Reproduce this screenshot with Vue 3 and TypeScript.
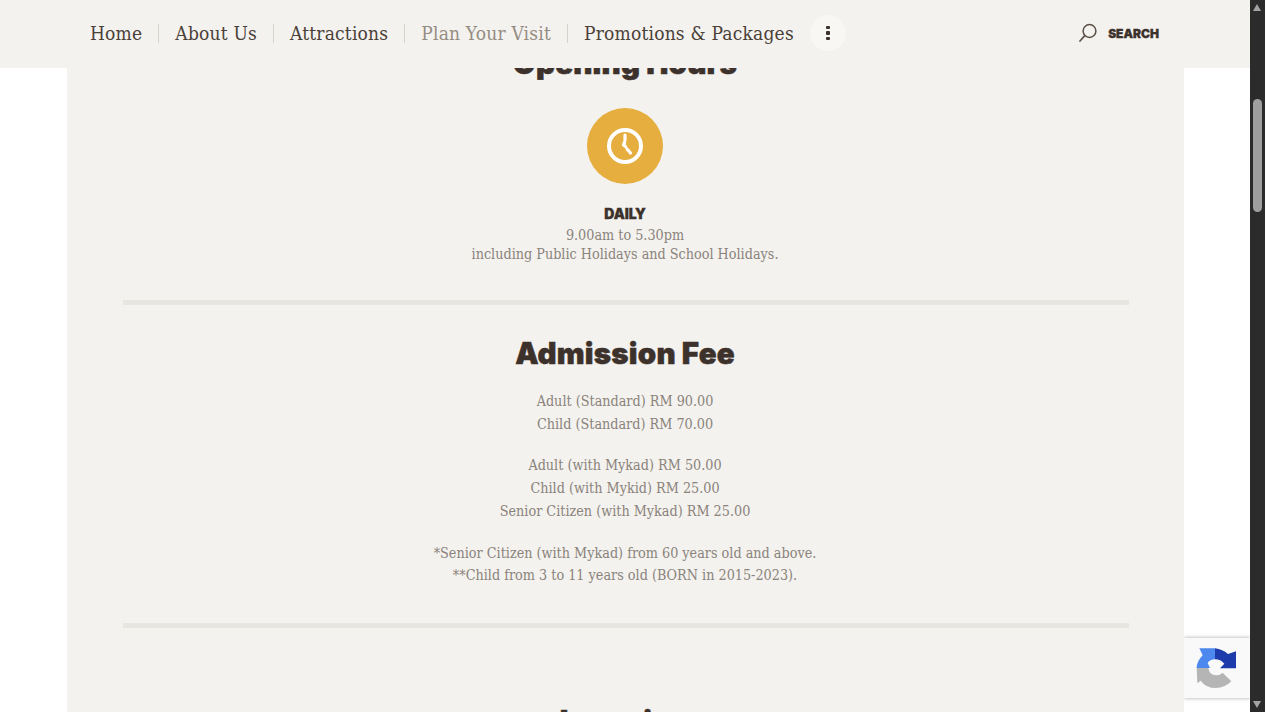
<script setup lang="ts">
const navItems = [
  { label: 'Home', active: false },
  { label: 'About Us', active: false },
  { label: 'Attractions', active: false },
  { label: 'Plan Your Visit', active: true },
  { label: 'Promotions & Packages', active: false },
]

const feeGroups = [
  ['Adult (Standard) RM 90.00', 'Child (Standard) RM 70.00'],
  ['Adult (with Mykad) RM 50.00', 'Child (with Mykid) RM 25.00', 'Senior Citizen (with Mykad) RM 25.00'],
  ['*Senior Citizen (with Mykad) from 60 years old and above.', '**Child from 3 to 11 years old (BORN in 2015-2023).'],
]
</script>

<template>
  <div class="window">
    <div class="viewport">
      <header class="topbar">
        <nav class="nav">
          <a v-for="item in navItems" :key="item.label" class="nav-item" :class="{ active: item.active }">{{ item.label }}</a>
          <button class="more" aria-label="More">
            <span></span><span></span><span></span>
          </button>
        </nav>
        <div class="search">
          <svg width="20" height="20" viewBox="0 0 20 20" fill="none" stroke="#5a5047">
            <circle cx="11.5" cy="8" r="6.4" stroke-width="1.5" />
            <path d="M6.8 12.6 2 18" stroke-width="1.7" stroke-linecap="round" />
          </svg>
          <span>SEARCH</span>
        </div>
      </header>

      <main class="card">
        <section class="block opening">
          <h2>Opening Hours</h2>
          <div class="clock">
            <svg width="40" height="40" viewBox="0 0 40 40" fill="none" stroke="#fff">
              <circle cx="20" cy="20" r="16" stroke-width="4" />
              <path d="M20 9v5" stroke-width="3.2" stroke-linecap="round" />
              <path d="M19.5 16.5 18.5 19l2 1.5" stroke-width="3.4" stroke-linecap="round" stroke-linejoin="round" />
              <path d="M22 23l3.5 4" stroke-width="3.2" stroke-linecap="round" />
            </svg>
          </div>
          <h3>DAILY</h3>
          <p class="hours">9.00am to 5.30pm<br />including Public Holidays and School Holidays.</p>
        </section>

        <section class="block fees">
          <h2>Admission Fee</h2>
          <p v-for="(group, i) in feeGroups" :key="i" class="fee-group">
            <template v-for="line in group" :key="line">{{ line }}<br /></template>
          </p>
        </section>

        <section class="block location">
          <h2>Location</h2>
        </section>
      </main>

      <div class="recaptcha">
        <svg width="50" height="50" viewBox="0 0 150 150">
          <path d="M20 78Q20 58 38 40L28 19H75V52Q60 52 53 63L60 78Z" fill="#4d88ee" />
          <path d="M75 19Q98 22 114 36L138 28V79H90L103 65Q92 52 75 52Z" fill="#1d3bab" />
          <path d="M20 78H55Q58 100 78 100Q90 100 98 92L124 118Q105 138 77 138Q48 138 32 116L22 124Z" fill="#b5b5b5" />
        </svg>
      </div>
    </div>

    <aside class="scrollbar">
      <i class="arrow up"></i>
      <div class="thumb"></div>
      <i class="arrow down"></i>
    </aside>
  </div>
</template>

<style>
html,
body {
  margin: 0;
  height: 100%;
  overflow: hidden;
  background: #fff;
}
</style>

<style scoped>
.window {
  display: flex;
  height: 712px;
  overflow: hidden;
}

.viewport {
  flex: 1;
  position: relative;
  overflow: hidden;
  background: #fff;
}

.topbar {
  position: absolute;
  top: 0;
  left: 0;
  right: 0;
  z-index: 2;
  height: 68px;
  padding: 0 91px 2px 90px;
  box-sizing: border-box;
  display: flex;
  align-items: center;
  justify-content: space-between;
  background: #f4f2ee;
}

.nav {
  display: flex;
  align-items: center;
}

.nav-item {
  padding: 0 16px;
  border-left: 1px solid #d6d2cc;
  font: 19px/19px "DejaVu Serif Condensed", "DejaVu Serif", serif;
  letter-spacing: 0.2px;
  color: #4a4038;
  white-space: nowrap;
}

.nav-item:first-child {
  padding-left: 0;
  border-left: 0;
}

.nav-item.active {
  color: #948c83;
}

.more {
  width: 36px;
  height: 36px;
  padding: 0;
  border: 0;
  border-radius: 50%;
  background: #f8f7f4;
  display: flex;
  flex-direction: column;
  align-items: center;
  justify-content: center;
  gap: 2px;
}

.more span {
  width: 4px;
  height: 3.4px;
  border-radius: 1px;
  background: #3c312b;
}

.search {
  display: flex;
  align-items: center;
  gap: 10px;
  font: 900 12px "Inter", sans-serif;
  -webkit-text-stroke: 0.3px #3c312b;
  color: #3c312b;
}

.card {
  width: 1117px;
  height: 100%;
  margin-left: 67px;
  padding: 45px 55px 0 56px;
  box-sizing: border-box;
  background: #f4f2ee;
  text-align: center;
  font-family: "DejaVu Serif Condensed", "DejaVu Serif", serif;
  font-size: 14.25px;
  color: #8a837c;
}

.block {
  padding-right: 2px;
}

.block h2 {
  margin: 0;
  font: 900 29.5px/36px "Inter", sans-serif;
  letter-spacing: 0.2px;
  -webkit-text-stroke: 0.5px #3c312b;
  color: #3c312b;
}

.opening {
  padding-bottom: 36px;
  border-bottom: 5px solid #e8e6e1;
}

.clock {
  width: 76px;
  height: 76px;
  margin: 27px auto 0;
  border-radius: 50%;
  background: #e5ae3e;
  display: flex;
  align-items: center;
  justify-content: center;
}

.opening h3 {
  margin: 22px 0 0;
  font: 900 14px/16px "Inter", sans-serif;
  -webkit-text-stroke: 0.3px #3c312b;
  color: #3c312b;
}

.hours {
  margin: 4px 0 0;
  line-height: 19px;
}

.fees {
  padding: 30px 2px 36px 0;
  border-bottom: 5px solid #e8e6e1;
}

.fee-group {
  margin: 19px 0 0;
  line-height: 22.7px;
}

.location {
  padding-top: 75px;
}

.recaptcha {
  position: absolute;
  top: 638px;
  left: 1184px;
  right: 0;
  height: 60px;
  background: #f9f9f9;
  box-shadow: 0 0 4px rgba(0, 0, 0, 0.35);
  clip-path: inset(-6px 0 -6px 0);
  padding: 4px 0 0 6px;
  box-sizing: border-box;
}

.scrollbar {
  width: 15px;
  position: relative;
  background: #2b2b2b;
}

.thumb {
  position: absolute;
  top: 99px;
  left: 3px;
  width: 9px;
  height: 113px;
  border-radius: 5px;
  background: #9f9f9f;
}

.arrow {
  position: absolute;
  left: 3px;
  border-left: 4.5px solid transparent;
  border-right: 4.5px solid transparent;
}

.arrow.up {
  top: 4px;
  border-bottom: 7px solid #a3a3a3;
}

.arrow.down {
  bottom: 4px;
  border-top: 7px solid #a3a3a3;
}
</style>
